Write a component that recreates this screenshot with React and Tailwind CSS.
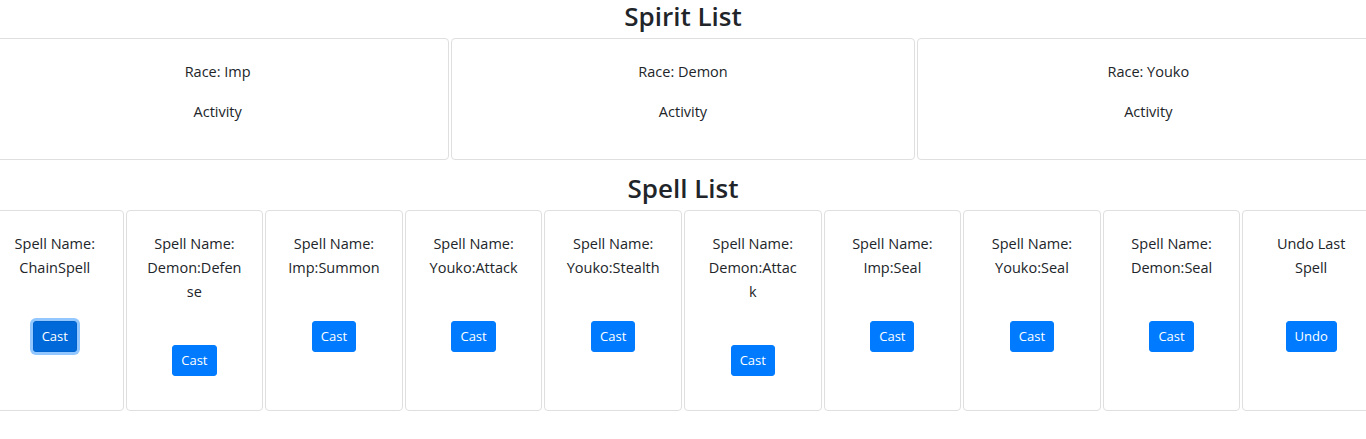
import React from "react";

const spirits = ["Imp", "Demon", "Youko"];
const spells = [
  { label: "Spell Name: ChainSpell", btn: "Cast", focused: true },
  { label: "Spell Name: Demon:Defense", btn: "Cast" },
  { label: "Spell Name: Imp:Summon", btn: "Cast" },
  { label: "Spell Name: Youko:Attack", btn: "Cast" },
  { label: "Spell Name: Youko:Stealth", btn: "Cast" },
  { label: "Spell Name: Demon:Attack", btn: "Cast" },
  { label: "Spell Name: Imp:Seal", btn: "Cast" },
  { label: "Spell Name: Youko:Seal", btn: "Cast" },
  { label: "Spell Name: Demon:Seal", btn: "Cast" },
  { label: "Undo Last Spell", btn: "Undo" },
];

function Title({ children, className = "" }) {
  return (
    <h2
      className={
        "text-center text-[26px] font-semibold leading-[32px] pb-[6px] text-[#212529] " +
        className
      }
    >
      {children}
    </h2>
  );
}

export default function App() {
  return (
    <div
      className="w-full overflow-hidden bg-white text-[#212529] text-[14.5px] leading-[24px]"
      style={{ fontFamily: '"Open Sans", "Noto Sans", sans-serif' }}
    >
      <Title>Spirit List</Title>
      <div className="flex -mx-[15px]">
        {spirits.map((s) => (
          <div key={s} className="flex-1 basis-0 min-w-0 px-px flex">
            <div className="flex-1 border border-[#dfdfdf] rounded-[4px] pt-[21px] pb-[19px] px-5 text-center">
              <p className="mb-4">Race: {s}</p>
              <p className="mb-4">Activity</p>
            </div>
          </div>
        ))}
      </div>
      <Title className="mt-3">Spell List</Title>
      <div className="flex -mx-[15px]">
        {spells.map((sp, i) => (
          <div key={i} className="flex-1 basis-0 min-w-0 px-px flex">
            <div className="flex-1 min-w-0 border border-[#dfdfdf] rounded-[4px] pt-[21px] pb-[19px] px-5 text-center">
              <p className="mb-4 break-words">{sp.label}</p>
              <div className="h-[25px]" />
              <p className="mb-[15px]">
                <button
                  className={
                    "inline-block align-middle rounded-[3px] border px-2 py-1 text-[13px] leading-[21px] text-white " +
                    (sp.focused
                      ? "bg-[#0069d9] border-[#0062cc] shadow-[0_0_0_3px_rgba(38,143,255,0.5)]"
                      : "bg-[#007bff] border-[#007bff]")
                  }
                >
                  {sp.btn}
                </button>
              </p>
            </div>
          </div>
        ))}
      </div>
    </div>
  );
}
